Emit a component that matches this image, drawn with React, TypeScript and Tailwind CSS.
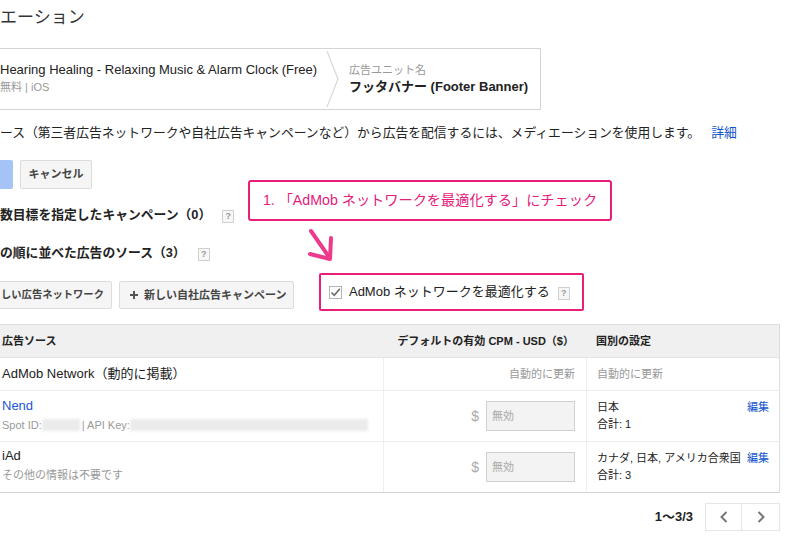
import React from "react";

function Help() {
  return (
    <span className="inline-flex items-center justify-center w-[12px] h-[13px] border border-[#d0d0d0] bg-[#f7f7f7] text-[9px] leading-none text-[#999] font-bold">
      ?
    </span>
  );
}

function Blur({ w }: { w: number }) {
  return (
    <span
      className="inline-block h-[12px] bg-[#ebebeb] blur-[1.5px] align-middle"
      style={{ width: w }}
    />
  );
}

function PriceInput() {
  return (
    <div className="flex items-center justify-end gap-[7px] pr-[11px] h-full">
      <span className="text-[14px] text-[#aaa]">$</span>
      <div className="w-[89px] h-[30px] border border-[#d0d0d0] bg-[#f3f3f3] flex items-center pl-[5px] text-[11px] text-[#aaa]">
        無効
      </div>
    </div>
  );
}

export default function App() {
  return (
    <div className="relative w-[800px] h-[545px] overflow-hidden bg-white text-[#222] font-['Liberation_Sans','Noto_Sans_CJK_JP',sans-serif]">
      {/* Title */}
      <div className="h-[48px] pt-[5px] text-[17px] leading-[26px] text-[#333]">エーション</div>

      {/* Breadcrumb */}
      <div className="flex w-[541px] h-[62px] border-y border-r border-[#d4d4d4]">
        <div className="w-[325px] shrink-0 pt-[12px]">
          <div className="text-[13px] leading-[17px] text-[#222] whitespace-nowrap">
            Hearing Healing - Relaxing Music &amp; Alarm Clock (Free)
          </div>
          <div className="mt-[2px] text-[11px] leading-[15px] text-[#999]">無料 | iOS</div>
        </div>
        <svg className="w-[16px] h-[60px] shrink-0" viewBox="0 0 16 60">
          <polyline points="2,2 13,30 2,58" fill="none" stroke="#d8d8d8" strokeWidth="1.2" />
        </svg>
        <div className="pl-[8px] pt-[14px]">
          <div className="text-[11px] leading-[15px] text-[#999]">広告ユニット名</div>
          <div className="text-[13px] leading-[17px] font-bold text-[#222] whitespace-nowrap">
            フッタバナー (Footer Banner)
          </div>
        </div>
      </div>

      {/* Description */}
      <div className="mt-[14px] text-[12.8px] leading-[18px] text-[#222] whitespace-nowrap">
        ース（第三者広告ネットワークや自社広告キャンペーンなど）から広告を配信するには、メディエーションを使用します。
        <span className="ml-[11px] text-[#1155cc]">詳細</span>
      </div>

      {/* Save / Cancel */}
      <div className="mt-[18px] flex items-center h-[29px]">
        <div className="w-[13px] h-[29px] bg-[#a6c3f7] rounded-r-[2px]" />
        <button className="ml-[7px] h-[29px] w-[72px] border border-[#dcdcdc] bg-[#f5f5f5] rounded-[2px] text-[11px] font-bold text-[#444]">
          キャンセル
        </button>
      </div>

      {/* Heading 1 */}
      <div className="mt-[17px] flex items-center h-[18px]">
        <span className="text-[12.8px] leading-[18px] font-bold">数目標を指定したキャンペーン（0）</span>
        <span className="ml-[11px] mt-[2px] flex">
          <Help />
        </span>
      </div>

      {/* Heading 2 */}
      <div className="mt-[20px] flex items-center h-[18px]">
        <span className="text-[12.8px] leading-[18px] font-bold">の順に並べた広告のソース（3）</span>
        <span className="ml-[12px] mt-[3px] flex">
          <Help />
        </span>
      </div>

      {/* Buttons row 2 */}
      <div className="mt-[11px] flex items-start h-[38px]">
        <button className="mt-[8px] -ml-[22px] h-[28px] pl-[22px] pr-[7px] border border-[#dcdcdc] bg-[#f5f5f5] rounded-[2px] text-[10.3px] font-bold text-[#444] whitespace-nowrap">
          しい広告ネットワーク
        </button>
        <button className="mt-[8px] ml-[7px] h-[28px] w-[175px] pl-[10px] flex items-center gap-[6px] border border-[#dcdcdc] bg-[#f5f5f5] rounded-[2px] text-[11px] font-bold text-[#444] whitespace-nowrap">
          <svg className="w-[8px] h-[8px]" viewBox="0 0 8 8">
            <rect x="3" y="0" width="2" height="8" fill="#555" />
            <rect x="0" y="3" width="8" height="2" fill="#555" />
          </svg>
          新しい自社広告キャンペーン
        </button>
        <div className="ml-[25px] w-[265px] h-[38px] border-2 border-[#e91e7a] rounded-[2px] flex items-center pl-[8px]">
          <span className="w-[13px] h-[13px] border border-[#b5b5b5] bg-white flex items-center justify-center">
            <svg className="w-[11px] h-[11px]" viewBox="0 0 11 11">
              <polyline points="1.5,5.5 4.3,8.3 9.8,1.8" fill="none" stroke="#6b6b6b" strokeWidth="1.6" />
            </svg>
          </span>
          <span className="ml-[7px] text-[13px] leading-[18px] text-[#222] whitespace-nowrap">
            AdMob ネットワークを最適化する
          </span>
          <span className="ml-[8px] mt-[2px] flex">
            <Help />
          </span>
        </div>
      </div>

      {/* Table */}
      <div className="mt-[13px] w-[780px] border-t border-r border-b border-t-[#dedede] border-r-[#dedede] border-b-[#d2d2d2]">
        <div className="grid grid-cols-[383px_203px_193px] h-[33px] bg-[#f0f0f0] border-b border-[#e3e3e3] items-center text-[11px] font-bold text-[#222]">
          <div className="pl-[2px]">広告ソース</div>
          <div className="text-right pr-[12px]">デフォルトの有効 CPM - USD（$）</div>
          <div className="pl-[10px]">国別の設定</div>
        </div>

        <div className="grid grid-cols-[383px_203px_193px] h-[33px] border-b border-[#ececec]">
          <div className="pl-[2px] flex items-center text-[13px]">AdMob Network（動的に掲載）</div>
          <div className="border-l border-[#efefef] flex items-center justify-end pr-[11px] text-[11px] text-[#999]">
            自動的に更新
          </div>
          <div className="border-l border-[#efefef] flex items-center pl-[10px] text-[11px] text-[#999]">
            自動的に更新
          </div>
        </div>

        <div className="grid grid-cols-[383px_203px_193px] h-[51px] border-b border-[#ececec]">
          <div className="pl-[2px] pt-[7px]">
            <div className="text-[13px] leading-[16px] text-[#1a55d6]">Nend</div>
            <div className="mt-[3px] text-[11px] leading-[16px] text-[#999] whitespace-nowrap flex items-center">
              Spot ID:
              <Blur w={38} />
              <span className="ml-[2px]">| API Key:</span>
              <Blur w={238} />
            </div>
          </div>
          <div className="border-l border-[#efefef]">
            <PriceInput />
          </div>
          <div className="border-l border-[#efefef] pl-[10px] pr-[10px] pt-[8px] flex justify-between text-[11px] leading-[17px]">
            <div>
              <div>日本</div>
              <div>合計: 1</div>
            </div>
            <div className="text-[#1155cc]">編集</div>
          </div>
        </div>

        <div className="grid grid-cols-[383px_203px_193px] h-[50px]">
          <div className="pl-[2px] pt-[6px]">
            <div className="text-[13px] leading-[16px]">iAd</div>
            <div className="mt-[3px] text-[11px] leading-[16px] text-[#999]">その他の情報は不要です</div>
          </div>
          <div className="border-l border-[#efefef]">
            <PriceInput />
          </div>
          <div className="border-l border-[#efefef] pl-[10px] pr-[10px] pt-[8px] flex justify-between text-[11px] leading-[17px]">
            <div>
              <div className="whitespace-nowrap">カナダ, 日本, アメリカ合衆国</div>
              <div>合計: 3</div>
            </div>
            <div className="text-[#1155cc] whitespace-nowrap">編集</div>
          </div>
        </div>
      </div>

      {/* Pagination */}
      <div className="mt-[10px] w-[780px] flex items-center justify-end">
        <span className="text-[13px] font-bold text-[#222]">1〜3/3</span>
        <div className="ml-[12px] flex border border-[#e6e6e6] h-[28px]">
          <div className="w-[36px] flex items-center justify-center border-r border-[#e6e6e6]">
            <svg className="w-[10px] h-[14px]" viewBox="0 0 10 14">
              <polyline points="7.5,2 2.5,7 7.5,12" fill="none" stroke="#777" strokeWidth="2" />
            </svg>
          </div>
          <div className="w-[37px] flex items-center justify-center">
            <svg className="w-[10px] h-[14px]" viewBox="0 0 10 14">
              <polyline points="2.5,2 7.5,7 2.5,12" fill="none" stroke="#777" strokeWidth="2" />
            </svg>
          </div>
        </div>
      </div>

      {/* Annotation overlay */}
      <div className="absolute left-[248px] top-[180px] w-[364px] h-[41px] border-2 border-[#e91e7a] rounded-[3px] bg-white flex items-center justify-center text-[14.2px] text-[#e4207a] whitespace-nowrap">
        1. 「AdMob ネットワークを最適化する」にチェック
      </div>
      <svg className="absolute left-[300px] top-[225px] w-[40px] h-[42px]" viewBox="0 0 40 42">
        <line x1="11" y1="6" x2="29" y2="32" stroke="#ee3a8a" strokeWidth="4" strokeLinecap="round" />
        <polyline points="31,13 30,34 10,29" fill="none" stroke="#ee3a8a" strokeWidth="4" strokeLinecap="round" strokeLinejoin="round" />
      </svg>
    </div>
  );
}
